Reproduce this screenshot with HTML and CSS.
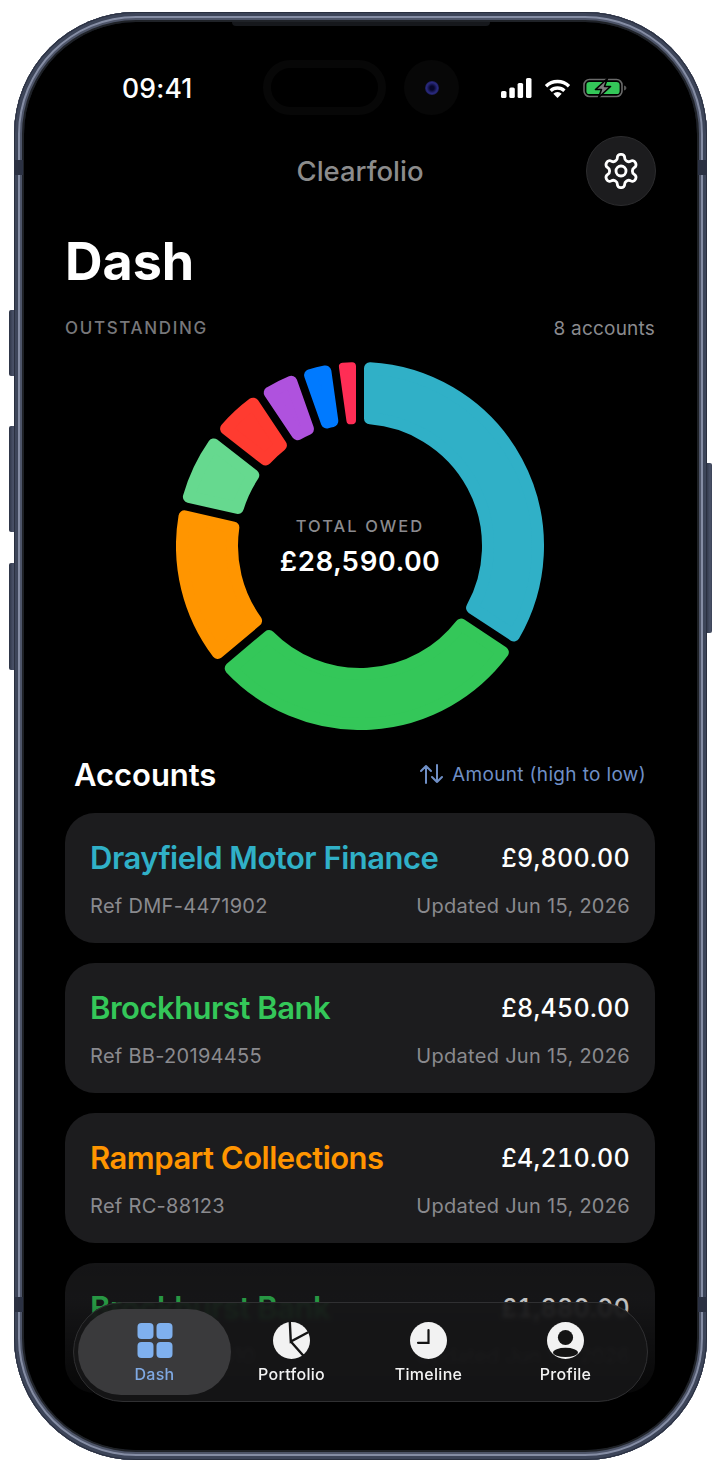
FILE: index.html
```html
<!DOCTYPE html>
<html lang="en">
<head>
<meta charset="utf-8">
<title>Clearfolio</title>
<link rel="stylesheet" href="styles.css">
</head>
<body>
<div class="page">
  <div class="hw hw-l hw-1"></div>
  <div class="hw hw-l hw-2"></div>
  <div class="hw hw-l hw-3"></div>
  <div class="hw hw-r"></div>
  <div class="device">
    <div class="band band-tl"></div>
    <div class="band band-tr"></div>
    <div class="band band-bl"></div>
    <div class="band band-br"></div>
    <div class="screen">
      <div class="speaker"></div>
      <div class="island"></div>
      <div class="camera"><div class="lens"></div></div>

      <div class="status">
        <span class="time">09:41</span>
        <div class="status-icons">
          <svg class="ic-signal" viewBox="0 0 31 20"><rect x="0" y="13" width="5.5" height="7" rx="1.6"/><rect x="8.3" y="9.5" width="5.5" height="10.5" rx="1.6"/><rect x="16.6" y="5" width="5.5" height="15" rx="1.6"/><rect x="25" y="0" width="5.5" height="20" rx="1.6"/></svg>
          <svg class="ic-wifi" viewBox="0 0 27 19"><path class="wifi-arc" d="M2 7.2A16.5 16.5 0 0 1 25 7.2"/><path class="wifi-arc" d="M6.6 11.8A10 10 0 0 1 20.4 11.8"/><path class="wifi-dot" d="M13.5 19L9.3 14.8A6 6 0 0 1 17.7 14.8Z"/></svg>
          <svg class="ic-batt" viewBox="0 0 44 20"><rect class="batt-shell" x="1" y="1.5" width="38" height="17" rx="5.5"/><rect class="batt-fill" x="3.4" y="3.9" width="33.2" height="12.2" rx="3.2"/><path class="batt-nub" d="M41 7.5c1.6.4 2.4 1.3 2.4 2.5s-.8 2.1-2.4 2.5z"/><path class="batt-bolt" d="M24.5 .5L12.5 11.5H18.5L15.5 19.5L27.5 8.5H21.5Z"/></svg>
        </div>
      </div>

      <header class="topbar">
        <span></span>
        <span class="brand">Clearfolio</span>
        <button class="gear" type="button" aria-label="Settings">
          <svg viewBox="0 0 24 24"><path d="M12.22 2h-.44a2 2 0 0 0-2 2v.18a2 2 0 0 1-1 1.73l-.43.25a2 2 0 0 1-2 0l-.15-.08a2 2 0 0 0-2.73.73l-.22.38a2 2 0 0 0 .73 2.73l.15.1a2 2 0 0 1 1 1.72v.51a2 2 0 0 1-1 1.74l-.15.09a2 2 0 0 0-.73 2.73l.22.38a2 2 0 0 0 2.73.73l.15-.08a2 2 0 0 1 2 0l.43.25a2 2 0 0 1 1 1.73V20a2 2 0 0 0 2 2h.44a2 2 0 0 0 2-2v-.18a2 2 0 0 1 1-1.73l.43-.25a2 2 0 0 1 2 0l.15.08a2 2 0 0 0 2.73-.73l.22-.39a2 2 0 0 0-.73-2.73l-.15-.08a2 2 0 0 1-1-1.74v-.5a2 2 0 0 1 1-1.74l.15-.09a2 2 0 0 0 .73-2.73l-.22-.38a2 2 0 0 0-2.73-.73l-.15.08a2 2 0 0 1-2 0l-.43-.25a2 2 0 0 1-1-1.73V4a2 2 0 0 0-2-2z"/><circle cx="12" cy="12" r="3"/></svg>
        </button>
      </header>

      <h1 class="title">Dash</h1>

      <div class="meta">
        <span class="meta-label">OUTSTANDING</span>
        <span class="meta-count">8 accounts</span>
      </div>

      <section class="chart">
        <svg class="donut" viewBox="176 361.5 368 368">
          <path class="seg s-cyan" d="M370 367.78A178 178 0 0 1 513.86 634.98L472.05 607.4A128 128 0 0 0 370 417.89Z"/>
          <path class="seg s-green" d="M502.86 651.68A178 178 0 0 1 230.68 667.82L268.98 635.5A128 128 0 0 0 461.04 624.07Z"/>
          <path class="seg s-orange" d="M217.74 652.5A178 178 0 0 1 184.47 515.88L233.34 526.98A128 128 0 0 0 256.08 620.23Z"/>
          <path class="seg s-mint" d="M188.91 496.39A178 178 0 0 1 213.81 443.95L253.29 474.81A128 128 0 0 0 237.77 507.47Z"/>
          <path class="seg s-red" d="M226.11 428.22A178 178 0 0 1 253.13 403.15L280.9 444.87A128 128 0 0 0 265.59 459.07Z"/>
          <path class="seg s-purple" d="M269.72 392.1A178 178 0 0 1 291.26 381.31L307.98 428.55A128 128 0 0 0 297.52 433.78Z"/>
          <path class="seg s-blue" d="M310.11 374.64A178 178 0 0 1 325.38 370.9L332.34 420.52A128 128 0 0 0 326.84 421.88Z"/>
          <path class="seg seg-thin s-rose" d="M342.9 366.31A180 180 0 0 1 352 365.68L352 419.75A126 126 0 0 0 350.42 419.86Z"/>
        </svg>
        <div class="chart-center">
          <span class="chart-label">TOTAL OWED</span>
          <span class="chart-total">£28,590.00</span>
        </div>
      </section>

      <div class="list-head">
        <h2 class="list-title">Accounts</h2>
        <div class="sort">
          <svg viewBox="0 0 23 20"><path d="M6 19V2M1 7l5-5 5 5M17 1v17M12 13l5 5 5-5"/></svg>
          <span>Amount (high to low)</span>
        </div>
      </div>

      <div class="cards">
        <article class="card">
          <div class="card-row"><span class="name c-cyan">Drayfield Motor Finance</span><span class="amount">£9,800.00</span></div>
          <div class="card-row"><span class="sub">Ref DMF-4471902</span><span class="sub">Updated Jun 15, 2026</span></div>
        </article>
        <article class="card">
          <div class="card-row"><span class="name c-green">Brockhurst Bank</span><span class="amount">£8,450.00</span></div>
          <div class="card-row"><span class="sub">Ref BB-20194455</span><span class="sub">Updated Jun 15, 2026</span></div>
        </article>
        <article class="card">
          <div class="card-row"><span class="name c-orange">Rampart Collections</span><span class="amount">£4,210.00</span></div>
          <div class="card-row"><span class="sub">Ref RC-88123</span><span class="sub">Updated Jun 15, 2026</span></div>
        </article>
        <article class="card">
          <div class="card-row"><span class="name c-green">Brockhurst Bank</span><span class="amount">£1,880.00</span></div>
          <div class="card-row"><span class="sub">Ref BB-20177310</span><span class="sub">Updated Jun 15, 2026</span></div>
        </article>
      </div>

      <div class="fade"></div>

      <nav class="tabbar">
        <a class="tab tab-active">
          <svg class="tab-icon" viewBox="0 0 37 37"><rect class="dash-sq" x="1.5" y="1" width="16" height="16" rx="4"/><rect class="dash-sq" x="20.5" y="1" width="16" height="16" rx="4"/><rect class="dash-sq" x="1.5" y="20" width="16" height="16" rx="4"/><rect class="dash-sq" x="20.5" y="20" width="16" height="16" rx="4"/></svg>
          <span>Dash</span>
        </a>
        <a class="tab">
          <svg class="tab-icon" viewBox="0 0 37 37"><circle class="disc" cx="18.5" cy="18.5" r="18.5"/><path class="cut" d="M16.8-.5L17.8 19.5L35.2 10.2M17.8 19.5L30.2 33.5"/></svg>
          <span>Portfolio</span>
        </a>
        <a class="tab">
          <svg class="tab-icon" viewBox="0 0 37 37"><circle class="disc" cx="18.5" cy="18.5" r="18.5"/><path class="hand" d="M18.5 8V20.8H8"/></svg>
          <span>Timeline</span>
        </a>
        <a class="tab">
          <svg class="tab-icon" viewBox="0 0 37 37"><circle class="disc" cx="18.5" cy="18.5" r="18.5"/><circle class="person" cx="18.5" cy="15.5" r="7.6"/><ellipse class="person" cx="18.5" cy="30.4" rx="12.4" ry="4.6"/></svg>
          <span>Profile</span>
        </a>
      </nav>
    </div>
  </div>
</div>
</body>
</html>
```

FILE: styles.css
```css
* { box-sizing: border-box; }
html, body { margin: 0; padding: 0; background: #fff; }
body { font-family: Inter, "Liberation Sans", sans-serif; color: #fff; }

.page { position: relative; width: 720px; height: 1472px; padding: 12px 0 0 14px; overflow: hidden; }

.hw { position: absolute; width: 6px; background: linear-gradient(90deg, #2c3345, #4a5268 70%, #3a4155); }
.hw-l { left: 9px; border-radius: 2px 0 0 2px; }
.hw-1 { top: 310px; height: 66px; }
.hw-2 { top: 426px; height: 106px; }
.hw-3 { top: 563px; height: 107px; }
.hw-r { left: 706px; top: 463px; height: 170px; border-radius: 0 2px 2px 0; }

.device {
  position: relative;
  width: 693px;
  height: 1448px;
  padding: 10px;
  border-radius: 122px;
  background: #343b4f;
  box-shadow: inset 0 0 0 1px #2a3040, inset 0 0 0 4px #3d4559, inset 0 0 0 6px #858da4, inset 0 0 0 8px #4e5569, inset 0 0 0 10px #1f2227;
}
.band { position: absolute; background: #2b3142; }
.band-tl { left: 0; top: 148px; width: 9px; height: 15px; }
.band-tr { right: 0; top: 148px; width: 9px; height: 15px; }
.band-bl { left: 0; top: 1285px; width: 9px; height: 15px; }
.band-br { right: 0; top: 1285px; width: 9px; height: 15px; }

.screen {
  position: relative;
  width: 673px;
  height: 1428px;
  padding: 1px 42px 0 41px;
  border-radius: 112px;
  background: #000;
  overflow: hidden;
}
.speaker { position: absolute; left: 208px; top: 0; width: 258px; height: 4px; background: #16181c; border-radius: 0 0 6px 6px; }
.island { position: absolute; left: 239px; top: 38px; width: 123px; height: 55px; border: 8px solid #070707; border-radius: 28px; }
.camera { position: absolute; left: 380px; top: 38px; width: 55px; height: 55px; border-radius: 50%; background: #070707; display: grid; place-items: center; }
.lens { width: 14px; height: 14px; border-radius: 50%; background: radial-gradient(circle, #06062a 20%, #2a2a80 55%, #14143c 80%, #08080f); }

.status { display: flex; justify-content: space-between; align-items: center; height: 36px; margin-top: 47px; padding: 0 28px 0 57px; position: relative; }
.time { font-size: 26.5px; font-weight: 500; letter-spacing: .2px; line-height: 36px; }
.status-icons { display: flex; align-items: center; }
.ic-signal { width: 31px; height: 20px; fill: #fff; }
.ic-wifi { width: 27px; height: 19px; margin-left: 12px; }
.wifi-arc { fill: none; stroke: #fff; stroke-width: 3.4; }
.wifi-dot { fill: #fff; }
.ic-batt { width: 44px; height: 20px; margin-left: 12px; }
.batt-shell { fill: none; stroke: #6a6a6a; stroke-width: 1.6; }
.batt-fill { fill: #34c759; }
.batt-nub { fill: #555; }
.batt-bolt { fill: #7d7d7d; stroke: #000; stroke-width: 1.6; stroke-linejoin: round; }

.topbar { display: grid; grid-template-columns: 70px 1fr 70px; align-items: center; margin-top: 30px; height: 70px; }
.brand { text-align: center; font-size: 27.5px; font-weight: 500; color: #8c8c8c; }
.gear { width: 70px; height: 70px; margin-left: 1px; padding: 0; border-radius: 50%; background: #1c1c1e; border: 1px solid #2c2c2e; display: grid; place-items: center; }
.gear svg { width: 40px; height: 40px; fill: none; stroke: #fff; stroke-width: 1.7; stroke-linecap: round; stroke-linejoin: round; }

.title { margin: 26px 0 0; font-size: 52px; line-height: 60px; font-weight: 700; }

.meta { display: flex; justify-content: space-between; align-items: center; height: 24px; margin-top: 24px; }
.meta-label { font-size: 17px; font-weight: 500; letter-spacing: 1.65px; color: #77777a; }
.meta-count { font-size: 19px; letter-spacing: .2px; color: #8a8a8e; }

.chart { display: grid; place-items: center; height: 368px; margin-top: 22px; }
.donut { grid-area: 1 / 1; width: 368px; height: 368px; display: block; }
.seg { stroke-width: 12; stroke-linejoin: round; }
.seg-thin { stroke-width: 8; }
.s-cyan { fill: #30b0c7; stroke: #30b0c7; }
.s-green { fill: #34c759; stroke: #34c759; }
.s-orange { fill: #ff9500; stroke: #ff9500; }
.s-mint { fill: #66d98f; stroke: #66d98f; }
.s-red { fill: #ff3b30; stroke: #ff3b30; }
.s-purple { fill: #af52de; stroke: #af52de; }
.s-blue { fill: #007aff; stroke: #007aff; }
.s-rose { fill: #ff2d55; stroke: #ff2d55; }
.chart-center { grid-area: 1 / 1; display: flex; flex-direction: column; align-items: center; margin-top: 6px; }
.chart-label { font-size: 16.5px; font-weight: 500; letter-spacing: 2.05px; line-height: 24px; color: #8a8a8e; }
.chart-total { font-size: 27.5px; font-weight: 600; letter-spacing: .4px; line-height: 46px; font-variant-numeric: tabular-nums; }

.list-head { display: flex; justify-content: space-between; align-items: center; height: 40px; margin-top: 24px; padding: 0 9px; }
.list-title { margin: 0; font-size: 31px; font-weight: 600; letter-spacing: -.05px; }
.sort { display: flex; align-items: center; gap: 9px; color: #6f8fc6; font-size: 19px; letter-spacing: .35px; }
.sort svg { width: 23px; height: 20px; fill: none; stroke: #6f8fc6; stroke-width: 2; stroke-linecap: round; stroke-linejoin: round; }

.cards { display: flex; flex-direction: column; gap: 20px; margin-top: 19px; }
.card { display: flex; flex-direction: column; justify-content: center; gap: 16px; height: 130px; padding: 2px 25px 0; border-radius: 30px; background: #1c1c1e; flex: none; }
.card-row { display: flex; justify-content: space-between; align-items: center; }
.name { font-size: 31px; line-height: 38px; font-weight: 600; letter-spacing: -.5px; }
.c-cyan { color: #30b0c7; }
.c-green { color: #34c759; }
.c-orange { color: #ff9500; }
.amount { font-size: 25px; font-weight: 500; letter-spacing: .3px; font-variant-numeric: tabular-nums; }
.sub { font-size: 20px; line-height: 26px; color: #8a8a8e; letter-spacing: .3px; }

.fade { position: absolute; left: 0; right: 0; bottom: 0; height: 204px; background: linear-gradient(180deg, rgba(0,0,0,0) 0, rgba(0,0,0,.28) 10%, rgba(0,0,0,.24) 27%, rgba(0,0,0,.8) 76%, #000 92%); }

.tabbar {
  position: absolute;
  left: 49px;
  top: 1280px;
  width: 575px;
  height: 100px;
  padding: 6px 0 0 12px;
  display: grid;
  grid-template-columns: repeat(4, 137px);
  align-items: start;
  border: 1px solid #303032;
  border-radius: 50px;
  background: rgba(22, 22, 23, .9);
  backdrop-filter: blur(2px);
}
.tab { display: flex; flex-direction: column; align-items: center; gap: 5px; height: 86px; padding-top: 13px; font-size: 16px; line-height: 20px; font-weight: 500; letter-spacing: .3px; color: #f2f2f2; }
.tab-active { margin: 0 -8px; border-radius: 43px; background: #3a3a3c; color: #7fa9e3; }
.tab-icon { width: 37px; height: 37px; flex: none; overflow: hidden; }
.dash-sq { fill: #7fb0ee; }
.disc { fill: #f2f2f2; }
.cut { fill: none; stroke: #141414; stroke-width: 2.4; }
.hand { fill: none; stroke: #141414; stroke-width: 2.2; stroke-linecap: round; stroke-linejoin: miter; }
.person { fill: #141414; }
```
